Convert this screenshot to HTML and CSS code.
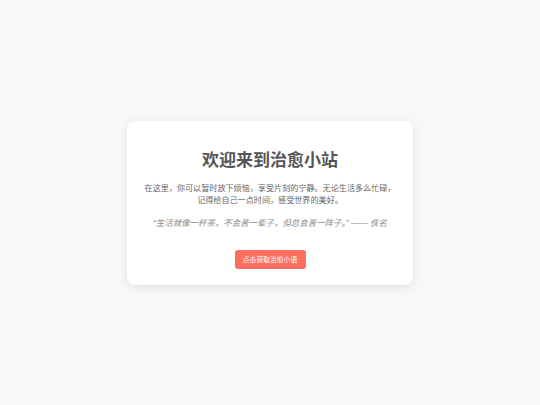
FILE: index.html
```html
<!DOCTYPE html>
<html lang="zh">
<head>
<meta charset="utf-8">
<title>治愈小站</title>
<link rel="stylesheet" href="styles.css">
</head>
<body>
<main class="page">
  <section class="card">
    <h1 class="title">欢迎来到治愈小站</h1>
    <p class="intro">在这里，你可以暂时放下烦恼，享受片刻的宁静。无论生活多么忙碌，<br>记得给自己一点时间，感受世界的美好。</p>
    <p class="quote">“生活就像一杯茶，不会苦一辈子，但总会苦一阵子。” —— 佚名</p>
    <button class="btn" type="button">点击获取治愈小语</button>
  </section>
</main>
</body>
</html>
```

FILE: styles.css
```css
html, body {
  margin: 0;
  padding: 0;
}
body {
  background: #f8f8f8;
  font-family: "Liberation Sans", "Noto Sans CJK SC", sans-serif;
}
.page {
  height: 405px;
  display: flex;
  align-items: center;
  justify-content: center;
}
.card {
  width: 286px;
  box-sizing: border-box;
  padding: 28px 12px 16px;
  background: #ffffff;
  border-radius: 8px;
  box-shadow: 0 2px 8px rgba(0, 0, 0, 0.1);
  text-align: center;
}
.title {
  margin: 0 0 10px;
  font-size: 17px;
  line-height: 24px;
  font-weight: 700;
  color: #555555;
}
.intro {
  margin: 0;
  font-size: 8.1px;
  line-height: 12px;
  color: #666666;
}
.quote {
  margin: 10px 0 0;
  font-size: 8.45px;
  line-height: 12px;
  font-style: italic;
  color: #888888;
}
.btn {
  display: inline-block;
  margin-top: 21px;
  width: 71px;
  height: 19px;
  padding: 0;
  border: none;
  border-radius: 3px;
  background: #ff6f61;
  color: #ffffff;
  font-family: "Liberation Sans", "Noto Sans CJK SC", sans-serif;
  font-size: 6.8px;
  line-height: 19px;
  cursor: pointer;
}
```
